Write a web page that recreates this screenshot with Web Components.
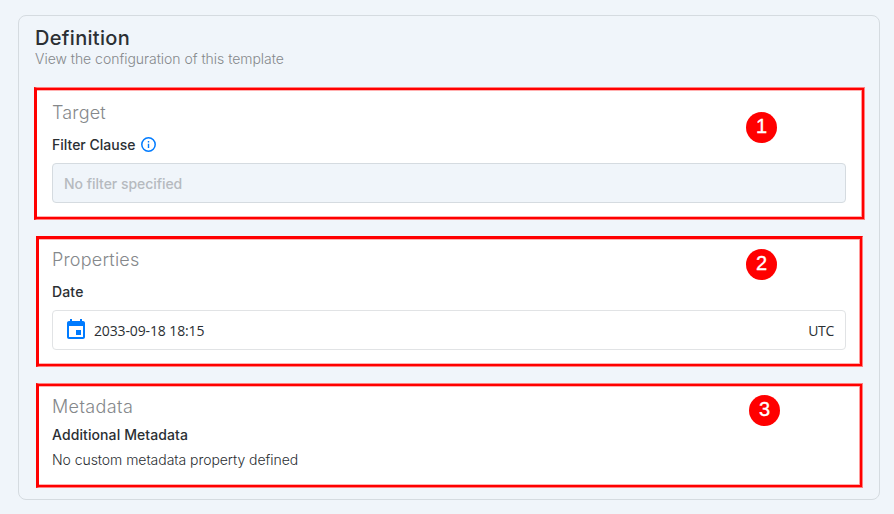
<!DOCTYPE html>
<html lang="en"><head><meta charset="utf-8"><title>Definition</title>
<style>
html,body{margin:0;height:100%}
body{background:#f0f5fa;font-family:Inter,"Open Sans",sans-serif;color:#2b2f33;padding:15px 14px 14px 18px;box-sizing:border-box;overflow:hidden}
</style></head><body>
<definition-card heading="Definition" subtitle="View the configuration of this template">
  <config-section heading="Target" number="1" style="--h:133px;--x:-1px;--w:831px;--pl:15px;--pr:18px;--pt:11px;--bx:709px;--by:24px;--hl:.15px;--edge:#ff8080">
    <field-label style="--mt:9px">Filter Clause<info-icon slot="icon"></info-icon></field-label>
    <value-box muted style="--mt:8px">No filter specified</value-box>
  </config-section>
  <config-section heading="Properties" number="2" style="--h:131px;--mt:16px;--pt:9px;--hl:.2px;--bx:707px;--by:12px">
    <field-label style="--mt:9px;--ls:.15px">Date</field-label>
    <value-box style="--mt:8px"><calendar-icon slot="start"></calendar-icon>2033-09-18 18:15<span slot="end">UTC</span></value-box>
  </config-section>
  <config-section heading="Metadata" number="3" style="--h:105px;--mt:16px;--pt:9px;--hl:.38px;--bx:710px;--by:11px;--edge:#ff8080">
    <field-label style="--mt:5px;--ls:.1px">Additional Metadata</field-label>
    <plain-text>No custom metadata property defined</plain-text>
  </config-section>
</definition-card>
<script>
const define=(name,html)=>customElements.define(name,class extends HTMLElement{
  constructor(){super();this.attachShadow({mode:'open'}).innerHTML=html}
  connectedCallback(){for(const el of this.shadowRoot.querySelectorAll('[data-attr]'))el.textContent=this.getAttribute(el.dataset.attr)}
});
define('info-icon',`<style>:host{display:block;width:16px;height:16px}svg{display:block}</style>
<svg width="16" height="16" viewBox="0 0 16 16" fill="none" stroke="#007bff"><circle cx="7.5" cy="7.5" r="6.7" stroke-width="1.5"/><path d="M7.5 6.8v4.2M7.5 4v1.5" stroke-width="1.4"/></svg>`);
define('calendar-icon',`<style>:host{display:block;width:24px;height:24px}svg{display:block}</style>
<svg width="24" height="24" viewBox="0 0 24 24" fill="#007bff"><path d="M17 12h-5v5h5v-5zM16 1v2H8V1H6v2H5c-1.11 0-1.99.9-1.99 2L3 19c0 1.1.89 2 2 2h14c1.1 0 2-.9 2-2V5c0-1.1-.9-2-2-2h-1V1h-2zm3 18H5V8h14v11z"/></svg>`);
define('definition-card',`<style>:host{display:block;box-sizing:border-box;height:485px;border:1px solid #d5dbe0;border-radius:8px;padding:10px 15px 0 16px}
h1{font-size:20px;line-height:24px;font-weight:500;margin:0;letter-spacing:.32px}p{font-size:14px;line-height:18px;font-weight:300;margin:0 0 19px;color:#85888b;letter-spacing:-.03px}</style>
<h1><span data-attr="heading"></span></h1><p><span data-attr="subtitle"></span></p><slot></slot>`);
define('config-section',`<style>:host{display:block;position:relative;box-sizing:border-box;width:var(--w,827px);height:var(--h);margin:var(--mt,0) 0 0 var(--x,1px);background:#fff;border:solid red;border-width:1px 1px 1px 3px;border-color:var(--edge,red) #ff8080 #ff8080 red;padding:var(--pt,10px) var(--pr,16px) 0 var(--pl,13px);box-shadow:inset -2px 0 red,inset 0 2px red,inset 0 -2px red,inset -3px 0 #ff9c9c,inset 0 3px #ffb0b0,inset 0 -3px #ffb0b0}
h2{margin:0;font-size:18px;line-height:27px;font-weight:300;color:#85888b;letter-spacing:var(--hl)}
.badge{position:absolute;left:var(--bx);top:var(--by);width:31px;height:31px;border-radius:50%;background:red;color:#fff;font:400 20px/29px "Liberation Sans",sans-serif;-webkit-text-stroke:.35px #fff;text-align:center}</style>
<h2><span data-attr="heading"></span></h2><slot></slot><div class="badge" data-attr="number"></div>`);
define('field-label',`<style>:host{display:flex;gap:6px;align-items:center;margin-top:var(--mt);font-size:14px;line-height:20px;font-weight:500;letter-spacing:var(--ls,0)}</style><span><slot></slot></span><slot name="icon"></slot>`);
define('value-box',`<style>:host{display:flex;align-items:center;box-sizing:border-box;height:40px;margin-top:var(--mt);border:1px solid #e1e3e5;border-radius:4px;padding:0 11px;font:400 14px "Open Sans",sans-serif;letter-spacing:-.13px}
:host([muted]){background:#f0f5fa;border-color:#d5dbe0;color:#b6babf;font:500 14px Inter,sans-serif;letter-spacing:-.05px}
.end{margin-left:auto;letter-spacing:-.3px}::slotted(calendar-icon){margin-right:6px}</style><slot name="start"></slot><span><slot></slot></span><span class="end"><slot name="end"></slot></span>`);
define('plain-text',`<style>:host{display:block;font-size:14px;line-height:20px;margin-top:5px;font-weight:350;letter-spacing:-.05px}</style><slot></slot>`);
</script></body></html>
